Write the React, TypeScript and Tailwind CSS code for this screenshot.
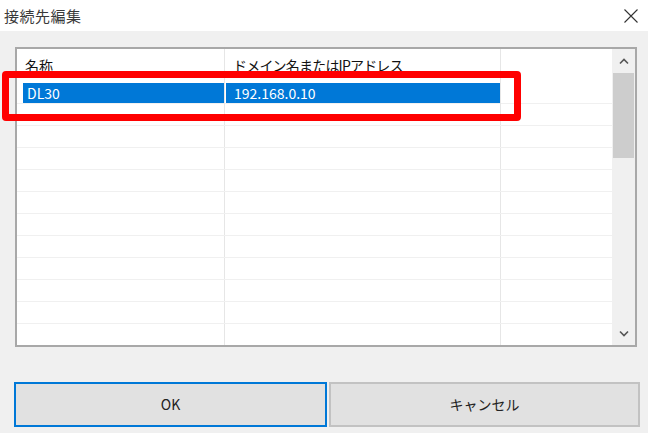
import React from "react";

const rows = Array.from({ length: 12 });

export default function App() {
  return (
    <div
      className="relative w-[648px] h-[433px] bg-[#f0f0f0] flex flex-col overflow-hidden"
      style={{ fontFamily: '"Noto Sans CJK JP", "Noto Sans", sans-serif' }}
    >
      {/* title bar */}
      <div className="h-[31px] bg-white flex items-center justify-between pl-[4px] pr-[9px]">
        <span className="text-[15px] text-[#3a3a3a] leading-none tracking-[0.5px]">接続先編集</span>
        <svg width="16" height="16" viewBox="0 0 16 16" className="text-[#333]">
          <path d="M1.5 1.5 L14.5 14.5 M14.5 1.5 L1.5 14.5" stroke="currentColor" strokeWidth="1.1" fill="none" />
        </svg>
      </div>

      {/* list view */}
      <div className="ml-[15px] mt-[16px] w-[622px] h-[300px] border-2 border-[#a8a8a8] bg-white flex overflow-hidden">
        <div className="flex-1 flex flex-col">
          {/* header */}
          <div className="h-[33px] grid grid-cols-[208px_276px_1fr] text-[14px] text-[#111] shrink-0">
            <div className="border-r border-[#e6e6e6] flex items-center pl-[8px]">名称</div>
            <div className="border-r border-[#e6e6e6] flex items-center pl-[8px] tracking-[-0.8px]">ドメイン名またはIPアドレス</div>
            <div />
          </div>
          {rows.map((_, i) => (
            <div
              key={i}
              className="h-[22px] shrink-0 grid grid-cols-[208px_276px_1fr] border-b border-[#f0f0f0]"
            >
              {i === 0 ? (
                <>
                  <div className="border-r border-[#e6e6e6] pl-[6px] py-[1px]">
                    <div className="h-full bg-[#0078d7] text-white text-[14px] leading-[20px] pl-[4px]">DL30</div>
                  </div>
                  <div className="border-r border-[#e6e6e6] pl-[1px] py-[1px]">
                    <div className="h-full bg-[#0078d7] text-white text-[14px] leading-[20px] pl-[8px]">192.168.0.10</div>
                  </div>
                  <div />
                </>
              ) : (
                <>
                  <div className="border-r border-[#e6e6e6]" />
                  <div className="border-r border-[#e6e6e6]" />
                  <div />
                </>
              )}
            </div>
          ))}
        </div>
        {/* scrollbar */}
        <div className="w-[23px] bg-[#f0f0f0] flex flex-col">
          <div className="h-[24px] flex items-center justify-center">
            <svg width="10" height="7" viewBox="0 0 10 7">
              <path d="M1 5.5 L5 1.5 L9 5.5" stroke="#555" strokeWidth="1.6" fill="none" />
            </svg>
          </div>
          <div className="mx-[1px] h-[85px] bg-[#cdcdcd]" />
          <div className="flex-1" />
          <div className="h-[24px] flex items-center justify-center">
            <svg width="10" height="7" viewBox="0 0 10 7">
              <path d="M1 1.5 L5 5.5 L9 1.5" stroke="#555" strokeWidth="1.6" fill="none" />
            </svg>
          </div>
        </div>
      </div>

      {/* buttons */}
      <div className="ml-[14px] mt-[35px] flex gap-[2px]">
        <button className="w-[313px] h-[45px] bg-[#e1e1e1] border-2 border-[#0078d7] text-[14px] text-[#222] flex items-center justify-center">
          OK
        </button>
        <button className="w-[311px] h-[45px] bg-[#e1e1e1] border-2 border-[#c2c2c2] text-[14px] text-[#222] flex items-center justify-center">
          キャンセル
        </button>
      </div>

      {/* red highlight overlay */}
      <div className="absolute left-[2px] top-[71px] w-[519px] h-[50px] border-[7px] border-[#ff0000] rounded-[4px] pointer-events-none" />
    </div>
  );
}
